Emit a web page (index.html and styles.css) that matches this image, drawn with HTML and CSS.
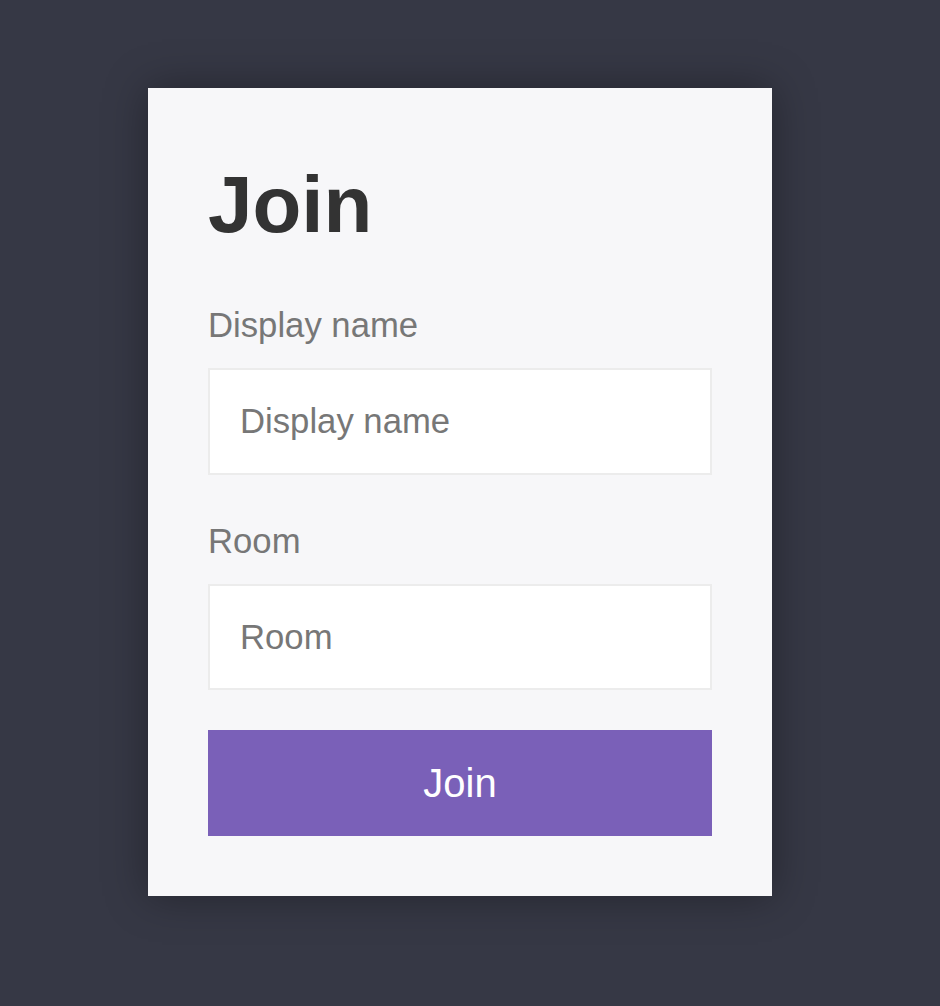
FILE: index.html
```html
<!DOCTYPE html>
<html lang="en">
<head>
<meta charset="utf-8">
<title>Join</title>
<link rel="stylesheet" href="styles.css">
</head>
<body>
<main class="page">
  <form class="card">
    <h1 class="title">Join</h1>
    <label class="label" for="name">Display name</label>
    <input class="field" id="name" type="text" placeholder="Display name">
    <label class="label" for="room">Room</label>
    <input class="field field-last" id="room" type="text" placeholder="Room">
    <button class="button" type="button">Join</button>
  </form>
</main>
</body>
</html>
```
FILE: styles.css
```css
html, body {
  margin: 0;
  padding: 0;
  height: 100%;
}
body {
  background: #363845;
  font-family: "Liberation Sans", Arial, sans-serif;
}
.page {
  padding: 88px 0 0 148px;
}
.card {
  width: 504px;
  padding: 60px;
  background: #f7f7f9;
  box-shadow: 0 0 40px rgba(0, 0, 0, 0.35);
  display: flex;
  flex-direction: column;
}
.title {
  margin: 17px 0 60px;
  font-size: 80px;
  line-height: 1;
  font-weight: 700;
  color: #333333;
}
.label {
  font-size: 34.7px;
  line-height: 40px;
  color: #777777;
  margin-bottom: 23px;
}
.field {
  box-sizing: border-box;
  width: 100%;
  height: 107px;
  margin: 0 0 46px;
  padding: 0 30px;
  border: 2px solid #ececec;
  background: #ffffff;
  font-family: "Liberation Sans", Arial, sans-serif;
  font-size: 34.7px;
  color: #555555;
  outline: none;
}
.field::placeholder {
  color: #777777;
  opacity: 1;
}
.field-last {
  margin-bottom: 40px;
  height: 106px;
}
.button {
  height: 106px;
  width: 100%;
  border: 0;
  background: #7a60b8;
  color: #ffffff;
  font-family: "Liberation Sans", Arial, sans-serif;
  font-size: 40px;
  padding: 0;
  cursor: pointer;
}
```
